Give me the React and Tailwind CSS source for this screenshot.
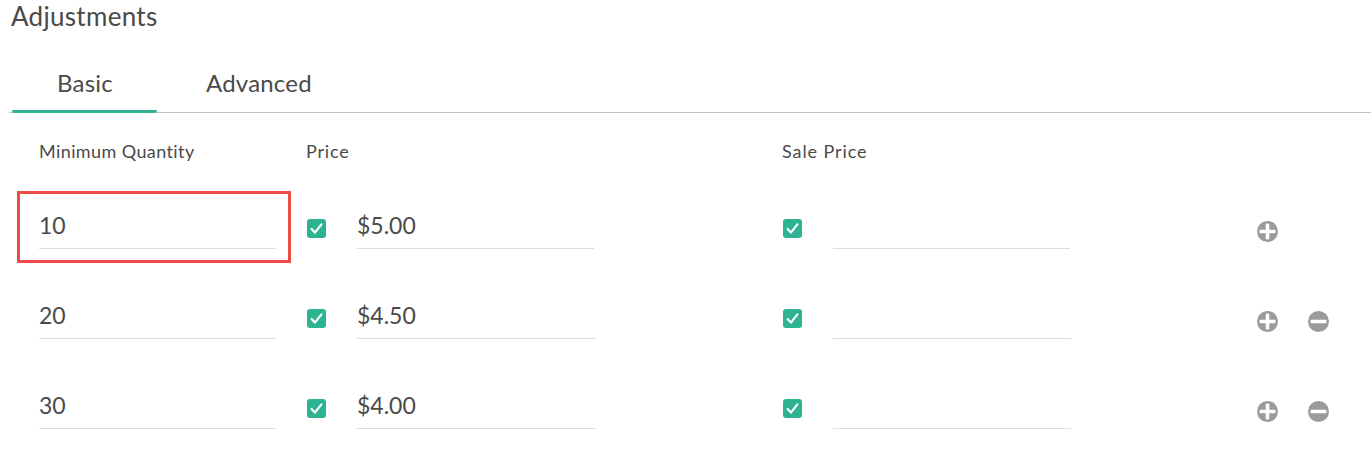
import React from 'react';

const rows = [
  { qty: '10', price: '$5.00', priceW: 'w-[237px]', saleW: 'w-[237px]', remove: false, highlight: true },
  { qty: '20', price: '$4.50', priceW: 'w-[239px]', saleW: 'w-[238px]', remove: true },
  { qty: '30', price: '$4.00', priceW: 'w-[239px]', saleW: 'w-[238px]', remove: true },
];

const Check = () => (
  <span className="flex h-[19px] w-[19px] shrink-0 items-center justify-center rounded-[3px] bg-[#2db391]">
    <svg className="h-[13px] w-[13px]" viewBox="0 0 13 13" fill="none" stroke="#fff" strokeWidth="2.2" strokeLinecap="round" strokeLinejoin="round">
      <path d="M1.6 7 L4.9 10.6 L11.4 2.4" />
    </svg>
  </span>
);

const RoundIcon = ({ minus }) => (
  <svg className="h-[21px] w-[21px]" viewBox="0 0 21 21">
    <circle cx="10.5" cy="10.5" r="10.5" fill="#9b9b9b" />
    <rect x="2.5" y="8.7" width="16" height="3.6" rx="1.2" fill="#fff" />
    {!minus && <rect x="8.7" y="2.5" width="3.6" height="16" rx="1.2" fill="#fff" />}
  </svg>
);

const Field = ({ value, width }) => (
  <div className={`h-[59px] border-b border-[#dcdcdc] pt-[22px] text-[23px] leading-[26px] text-[#4a4a4a] ${width}`}>
    {value}
  </div>
);

const Row = ({ qty, price, priceW, saleW, remove, highlight }) => (
  <div className="relative flex h-[90px] items-start">
    {highlight && <div className="absolute left-[17px] top-[1px] h-[72px] w-[274px] border-[3px] border-[#ec4a45]" />}
    <div className="ml-[39px]">
      <Field value={qty} width="w-[237px]" />
    </div>
    <div className="ml-[31px] mt-[29px]"><Check /></div>
    <div className="ml-[31px]">
      <Field value={price} width={priceW} />
    </div>
    <div className={`mt-[29px] ${priceW === 'w-[237px]' ? 'ml-[189px]' : 'ml-[187px]'}`}><Check /></div>
    <div className="ml-[31px]">
      <Field value="" width={saleW} />
    </div>
    <div className={`mt-[31px] flex gap-[30px] ${saleW === 'w-[237px]' ? 'ml-[187px]' : 'ml-[186px]'}`}>
      <RoundIcon />
      {remove && <RoundIcon minus />}
    </div>
  </div>
);

export default function App() {
  return (
    <div className="h-[457px] w-[1371px] overflow-hidden bg-white font-['Lato','Noto_Sans',sans-serif] text-[#4a4a4a]">
      <h2 className="pl-[11px] pt-[1px] text-[26px] font-normal leading-[30px] tracking-[0.3px]">Adjustments</h2>
      <div className="ml-[9px] mt-[38px] flex h-[44px] border-b border-[#c4c4c4] pl-[3px] text-[24px] leading-[28px] tracking-[0.2px]">
        <div className="h-[44px] w-[145px] rounded-b-[3px] border-b-[3px] border-[#2db391] pl-[45px]">Basic</div>
        <div className="ml-[49px]">Advanced</div>
      </div>
      <div className="mt-[27px] flex text-[18px] leading-[22px] tracking-[0.4px]">
        <div className="ml-[39px] w-[267px]">Minimum Quantity</div>
        <div className="w-[476px] tracking-[0.8px]">Price</div>
        <div className="tracking-[0.9px]">Sale Price</div>
      </div>
      <div className="mt-[28px]">
        {rows.map((row) => (
          <Row key={row.qty} {...row} />
        ))}
      </div>
    </div>
  );
}
